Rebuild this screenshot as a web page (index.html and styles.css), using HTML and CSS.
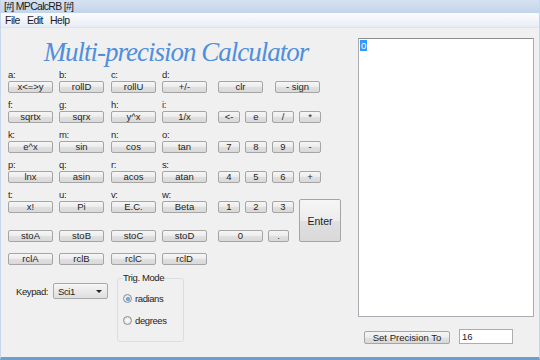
FILE: index.html
```html
<!DOCTYPE html>
<html lang="en">
<head>
    <meta charset="UTF-8">
    <meta name="viewport" content="width=device-width, initial-scale=1.0">
    <title>MPCalcRB</title>

    <link rel="stylesheet" href="styles.css">
</head>
<body>
    <div class="window">
        <div class="titlebar">[#] MPCalcRB [#]</div>
        <div class="menubar">
            <span class="menu">File</span>
            <span class="menu">Edit</span>
            <span class="menu">Help</span>
        </div>

        <div class="client">
            <div class="left">
                <h1 class="title">Multi-precision Calculator</h1>

                <div class="keys">
                    <!-- row 1 -->
                    <div class="key"><span class="tag">a:</span><button class="btn">x&lt;=&gt;y</button></div>
                    <div class="key"><span class="tag">b:</span><button class="btn">rollD</button></div>
                    <div class="key"><span class="tag">c:</span><button class="btn">rollU</button></div>
                    <div class="key"><span class="tag">d:</span><button class="btn">+/-</button></div>
                    <button class="btn span2">clr</button>
                    <button class="btn span2 sign">- sign</button>

                    <!-- row 2 -->
                    <div class="key"><span class="tag">f:</span><button class="btn">sqrtx</button></div>
                    <div class="key"><span class="tag">g:</span><button class="btn">sqrx</button></div>
                    <div class="key"><span class="tag">h:</span><button class="btn">y^x</button></div>
                    <div class="key"><span class="tag">i:</span><button class="btn">1/x</button></div>
                    <button class="btn small">&lt;-</button>
                    <button class="btn small">e</button>
                    <button class="btn small">/</button>
                    <button class="btn small">*</button>

                    <!-- row 3 -->
                    <div class="key"><span class="tag">k:</span><button class="btn">e^x</button></div>
                    <div class="key"><span class="tag">m:</span><button class="btn">sin</button></div>
                    <div class="key"><span class="tag">n:</span><button class="btn">cos</button></div>
                    <div class="key"><span class="tag">o:</span><button class="btn">tan</button></div>
                    <button class="btn small">7</button>
                    <button class="btn small">8</button>
                    <button class="btn small">9</button>
                    <button class="btn small">-</button>

                    <!-- row 4 -->
                    <div class="key"><span class="tag">p:</span><button class="btn">lnx</button></div>
                    <div class="key"><span class="tag">q:</span><button class="btn">asin</button></div>
                    <div class="key"><span class="tag">r:</span><button class="btn">acos</button></div>
                    <div class="key"><span class="tag">s:</span><button class="btn">atan</button></div>
                    <button class="btn small">4</button>
                    <button class="btn small">5</button>
                    <button class="btn small">6</button>
                    <button class="btn small">+</button>

                    <!-- row 5 -->
                    <div class="key"><span class="tag">t:</span><button class="btn">x!</button></div>
                    <div class="key"><span class="tag">u:</span><button class="btn">Pi</button></div>
                    <div class="key"><span class="tag">v:</span><button class="btn">E.C.</button></div>
                    <div class="key"><span class="tag">w:</span><button class="btn">Beta</button></div>
                    <button class="btn small">1</button>
                    <button class="btn small">2</button>
                    <button class="btn small">3</button>
                    <button class="btn enter">Enter</button>

                    <!-- registers -->
                    <button class="btn">stoA</button>
                    <button class="btn">stoB</button>
                    <button class="btn">stoC</button>
                    <button class="btn">stoD</button>
                    <button class="btn span2">0</button>
                    <button class="btn small dot">.</button>

                    <button class="btn">rclA</button>
                    <button class="btn">rclB</button>
                    <button class="btn">rclC</button>
                    <button class="btn">rclD</button>
                </div>

                <div class="controls">
                    <div class="keypad">
                        <span class="keypad-label">Keypad:</span>
                        <div class="select">Sci1<span class="arrow"></span></div>
                    </div>

                    <fieldset class="trig">
                        <legend>Trig. Mode</legend>
                        <div class="radio"><span class="circle checked"></span>radians</div>
                        <div class="radio"><span class="circle"></span>degrees</div>
                    </fieldset>
                </div>
            </div>

            <div class="right">
                <div class="display"><span class="selected">0</span></div>
                <div class="precision">
                    <button class="btn set-btn">Set Precision To</button>
                    <input class="prec-input" type="text" value="16">
                </div>
            </div>
        </div>
    </div>
</body>
</html>
```

FILE: styles.css
```css
* {
    box-sizing: border-box;
}
body {
    margin: 0;
    width: 540px;
    height: 360px;
    overflow: hidden;
    font-family: "Liberation Sans", Arial, sans-serif;
    font-size: 9.5px;
    letter-spacing: -0.4px;
    color: #1e1e1e;
    background-color: #f0f0f0;
}
.window {
    height: 360px;
    display: flex;
    flex-direction: column;
    border-left: 1px solid #c6d7eb;
    border-right: 1px solid #c6d7eb;
    border-bottom: 3px solid #6b9fcf;
}
.titlebar {
    height: 13px;
    padding-left: 3px;
    font-size: 10.5px;
    letter-spacing: -0.7px;
    line-height: 13px;
    color: #1a1a1a;
    background: linear-gradient(#d6e2f1, #c3d4ea);
}
.menubar {
    height: 15px;
    display: flex;
    padding-left: 4px;
    font-size: 10.5px;
    letter-spacing: -0.5px;
    line-height: 15px;
    background: linear-gradient(#fbfcfd, #e8edf5);
    border-bottom: 1px solid #dce4ef;
}
.menu {
    margin-right: 7px;
}
.client {
    flex: 1;
    display: flex;
}
.left {
    width: 350px;
}
.title {
    margin: 0 0 -3px 0;
    padding-top: 9px;
    font: italic normal 27px/30px "Liberation Serif", serif;
    letter-spacing: -1px;
    text-align: center;
    color: #4f8fdc;
}
.keys {
    display: grid;
    padding-left: 7px;
    grid-template-columns: 51px 52px 51px 56px 27px 27px 27px 27px;
    grid-template-rows: 29px 30px 30px 30px 30px 29px 23px;
}
.key {
    display: flex;
    flex-direction: column;
    justify-content: flex-end;
    align-items: flex-start;
}
.tag {
    line-height: 11px;
    margin-bottom: 1px;
}
.btn {
    font: inherit;
    width: 45px;
    height: 12px;
    padding: 0;
    line-height: 10px;
    color: #1e1e1e;
    border: 1px solid #a5a5a5;
    border-radius: 2px;
    background: linear-gradient(#f6f6f6 0%, #ececec 50%, #e0e0e0 51%, #d9d9d9 100%);
    align-self: end;
}
.key .btn {
    align-self: flex-start;
}
.small {
    width: 22px;
}
.span2 {
    grid-column: span 2;
}
.sign {
    margin-left: 3px;
}
.dot {
    width: 21px;
    margin-left: -4px;
}
.enter {
    grid-row: span 2;
    width: 42px;
    height: 43px;
    font-size: 10.5px;
}
.controls {
    display: flex;
    align-items: flex-start;
    padding-left: 15px;
    margin-top: 7px;
}
.keypad {
    display: flex;
    align-items: center;
    margin-top: 11px;
}
.keypad-label {
    width: 37px;
}
.select {
    width: 55px;
    height: 16px;
    display: flex;
    align-items: center;
    justify-content: space-between;
    padding: 0 5px 0 4px;
    border: 1px solid #a9a9a9;
    border-radius: 2px;
    background: linear-gradient(#f6f6f6, #dedede);
}
.arrow {
    width: 0;
    height: 0;
    border-left: 3px solid transparent;
    border-right: 3px solid transparent;
    border-top: 3px solid #222;
}
.trig {
    margin: 0 0 0 9px;
    width: 67px;
    height: 70px;
    padding: 0 0 0 5px;
    border: 1px solid #d8dfe4;
    border-radius: 3px;
    display: flex;
    flex-direction: column;
    gap: 13px;
}
.trig legend {
    padding: 0;
    line-height: 12px;
}
.radio {
    display: flex;
    align-items: center;
    gap: 3px;
    height: 9px;
}
.radio:first-of-type {
    margin-top: 10px;
}
.circle {
    width: 9px;
    height: 9px;
    border-radius: 50%;
    border: 1px solid #8e8f8f;
    background: radial-gradient(#ffffff, #d8d8d8);
    display: flex;
    align-items: center;
    justify-content: center;
}
.circle.checked::after {
    content: "";
    width: 4px;
    height: 4px;
    border-radius: 50%;
    background: radial-gradient(#8cc3f5, #2f6fbf);
}
.right {
    flex: 1;
    padding: 10px 0 0 7px;
}
.display {
    width: 176px;
    height: 279px;
    padding: 2px 1px;
    background-color: white;
    border: 1px solid #abadb3;
    border-top-color: #8a8d92;
    line-height: 10px;
}
.selected {
    background-color: #3399ff;
    color: white;
    padding: 0 1px;
}
.precision {
    display: flex;
    align-items: center;
    margin-top: 12px;
}
.set-btn {
    width: 86px;
    height: 13px;
    margin-left: 6px;
}
.prec-input {
    font: inherit;
    width: 54px;
    height: 15px;
    margin-left: 9px;
    padding: 0 2px;
    border: 1px solid #abadb3;
    background-color: white;
    color: #1e1e1e;
}
```
